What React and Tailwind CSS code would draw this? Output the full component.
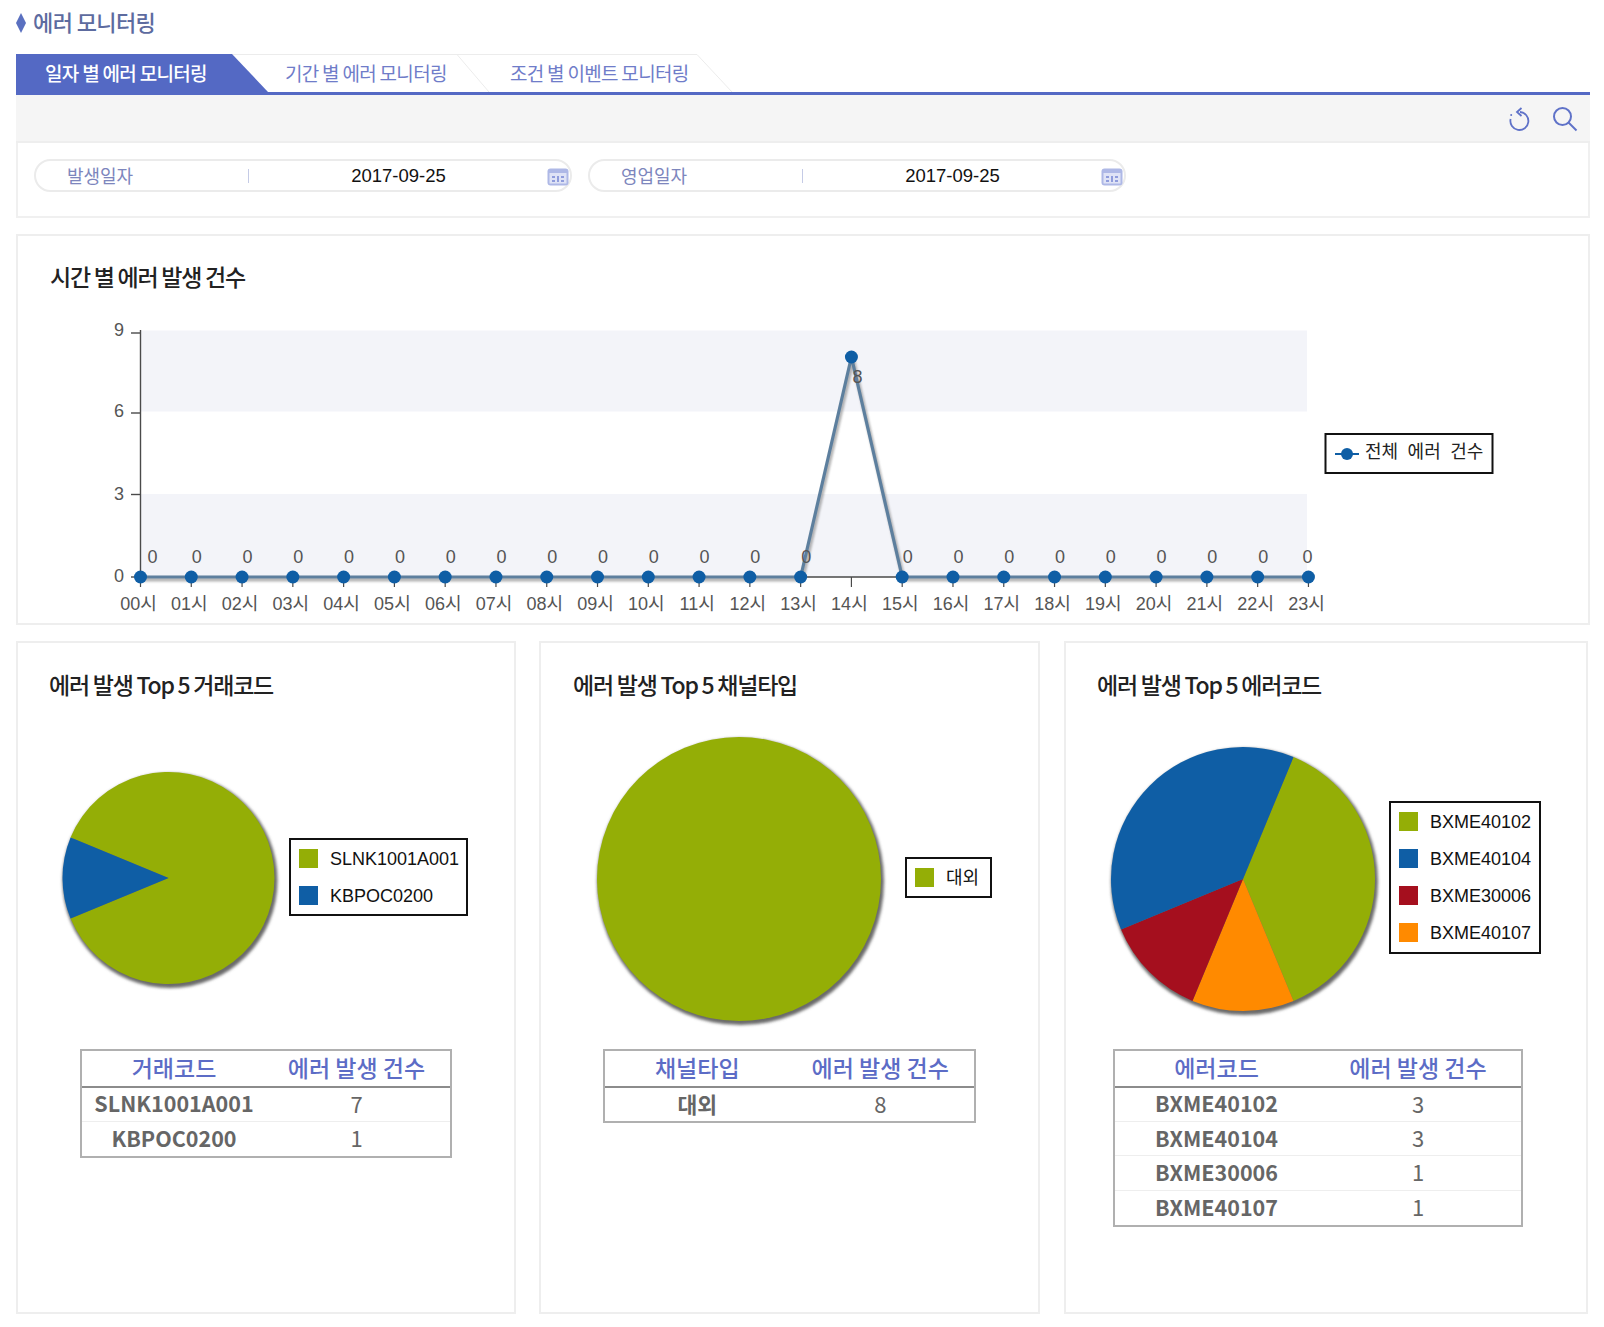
const CJK = "font-['Noto_Sans_CJK_KR','Noto_Sans',sans-serif]"
const CHART_FONT = "'Liberation Sans','Noto Sans CJK KR',sans-serif"

const GREEN = "#94ae06"
const BLUE = "#0f5ea5"
const RED = "#a50f1e"
const ORANGE = "#ff8a00"

const hours = Array.from({ length: 24 }, (_, i) => String(i).padStart(2, "0"))
const xAt = (i) => 140.5 + i * 50.78
const yAt = (v) => 577 - v * 27.5
const values = hours.map((_, i) => (i === 14 ? 8 : 0))

const arc = (cx, cy, r, from, to) => {
  const pt = (a) => {
    const rad = ((a - 90) * Math.PI) / 180
    return `${cx + r * Math.cos(rad)} ${cy + r * Math.sin(rad)}`
  }
  return `M${cx} ${cy}L${pt(from)}A${r} ${r} 0 ${to - from > 180 ? 1 : 0} 1 ${pt(to)}Z`
}

const Pie = ({ cx, cy, r, slices }) => (
  <g>
    <circle cx={cx + 1.5} cy={cy + 2.5} r={r + 1.5} fill="#6a6a6a" filter="url(#pieShadow)" />
    {slices.length === 1 ? (
      <circle cx={cx} cy={cy} r={r} fill={slices[0].color} />
    ) : (
      slices.map((s) => <path key={s.color} d={arc(cx, cy, r, s.from, s.to)} fill={s.color} />)
    )}
  </g>
)

const Legend = ({ x, y, w, h, items }) => (
  <g fontFamily={CHART_FONT} fontSize="18">
    <rect x={x} y={y} width={w} height={h} fill="#fff" stroke="#111" strokeWidth="2" />
    {items.map((item, i) => (
      <g key={item.label}>
        <rect x={x + 9} y={y + 10 + i * 37} width="19" height="19" fill={item.color} />
        <text x={x + 40} y={y + 26 + i * 37} fill="#111">
          {item.label}
        </text>
      </g>
    ))}
  </g>
)

const PieCard = ({ className, titleClass, title, viewBox, width, pie, legend, tableClass, headers, rows }) => (
  <div className={`border-2 border-[#eeeeee] h-[673px] box-border ${className}`}>
    <h3 className={`h-[82px] flex items-center text-[23px] font-medium tracking-[-1.25px] text-[#222222] ${titleClass} ${CJK}`}>
      {title}
    </h3>
    <svg viewBox={viewBox} width={width} height="318" className="block">
      <defs>
        <filter id="pieShadow" x="-10%" y="-10%" width="120%" height="120%">
          <feGaussianBlur stdDeviation="1.8" />
        </filter>
      </defs>
      <Pie {...pie} />
      <Legend {...legend} />
    </svg>
    <div className={`mt-[6px] border-2 border-[#b0b0b0] ${tableClass}`}>
      <table className={`w-full table-fixed text-center ${CJK}`}>
        <thead>
          <tr className="h-[36px] border-b-2 border-[#8c8c8c] text-[23px] leading-[30px] text-[#5c6cc6]">
            <th className="font-medium pb-[4px]">{headers[0]}</th>
            <th className="font-medium pr-[3px] pb-[4px]">{headers[1]}</th>
          </tr>
        </thead>
        <tbody>
          {rows.map((row, i) => (
            <tr
              key={row[0]}
              className={`h-[34.4px] text-[21.5px] leading-[28px] text-[#666666] ${i > 0 ? "border-t border-[#eeeeee]" : ""}`}
            >
              <td className="font-bold pb-[2px]">{row[0]}</td>
              <td className="text-[22px] pr-[3px] pb-[3px]">{row[1]}</td>
            </tr>
          ))}
        </tbody>
      </table>
    </div>
  </div>
)

const CalendarIcon = () => (
  <svg viewBox="0 0 22 18" className="w-[22px] h-[18px]">
    <rect x="0.5" y="0.5" width="21" height="17" rx="3" fill="#aeb8e6" />
    <rect x="2.5" y="5" width="17" height="10.5" fill="#dfe3f6" />
    <path d="M5 8h3v2H5zM10 8h2v6h-2zM14 8h3v2h-3zM5 12h3v2H5zM14 12h3v2h-3z" fill="#8f9cdc" />
  </svg>
)

const DateField = ({ label, date }) => (
  <div className="relative h-[33px] w-[538px] rounded-full border-2 border-[#ebebeb] flex items-center">
    <span className={`w-[212px] pl-[31px] text-[18px] tracking-[-0.1px] text-[#7d86bd] ${CJK}`}>{label}</span>
    <span className="w-px h-[14px] bg-[#c5cbe6]" />
    <span className="flex-1 pr-[22px] text-center text-[18.5px] text-[#111111] font-['Liberation_Sans',sans-serif]">{date}</span>
    <span className="absolute right-[1px] top-[7px]">
      <CalendarIcon />
    </span>
  </div>
)

const LineChart = () => (
  <svg viewBox="18 316 1570 307" width="1570" height="307" className="block" fontFamily={CHART_FONT} fontSize="18">
    <defs>
      <filter id="lineShadow" x="-2%" y="-10%" width="104%" height="120%">
        <feGaussianBlur stdDeviation="1.2" />
      </filter>
    </defs>
    <rect x="141" y="330.5" width="1166" height="81" fill="#f3f4f9" />
    <rect x="141" y="494" width="1166" height="83" fill="#f3f4f9" />
    <path d="M140.5 330V577H1308" fill="none" stroke="#4a4a4a" strokeWidth="1.4" />
    {[9, 6, 3, 0].map((v) => (
      <g key={v}>
        <path d={`M131 ${yAt(v) + (v === 9 ? 3.5 : v === 6 ? 1 : 0)}h9`} stroke="#4a4a4a" strokeWidth="1.4" />
        <text x="114" y={yAt(v) + (v === 9 ? 6 : 5)} fill="#555555">
          {v}
        </text>
      </g>
    ))}
    {hours.map((h, i) => (
      <g key={h}>
        <path d={`M${xAt(i)} 577v10`} stroke="#4a4a4a" strokeWidth="1.2" />
        <text x={xAt(i) - 2} y="610" textAnchor="middle" fill="#555555">
          {h}시
        </text>
      </g>
    ))}
    <polyline
      points={values.map((v, i) => `${xAt(i) + 1.5},${yAt(v) + 2.5}`).join(" ")}
      fill="none"
      stroke="#777777"
      strokeWidth="4"
      opacity="0.55"
      filter="url(#lineShadow)"
    />
    <polyline
      points={values.map((v, i) => `${xAt(i)},${yAt(v)}`).join(" ")}
      fill="none"
      stroke="#5d7f9e"
      strokeWidth="3.2"
    />
    {values.map((v, i) => (
      <circle key={i} cx={xAt(i)} cy={yAt(v)} r="6.5" fill={BLUE} />
    ))}
    {values.map((v, i) =>
      v > 0 ? (
        <text key={i} x={xAt(i) + 6} y={yAt(v) + 26} textAnchor="middle" fill="#555555">
          {v}
        </text>
      ) : (
        <text key={i} x={xAt(i) + (i === 0 ? 12 : i === 23 ? -1 : 5.5)} y="563" textAnchor="middle" fill="#555555">
          {v}
        </text>
      ),
    )}
    <rect x="1325.5" y="434" width="167" height="39" fill="#fff" stroke="#111" strokeWidth="2" />
    <path d="M1335 454h24" stroke={BLUE} strokeWidth="2" />
    <circle cx="1347" cy="454" r="6" fill={BLUE} />
    <text x="1365" y="458" fill="#222222" wordSpacing="4.5">
      전체 에러 건수
    </text>
  </svg>
)

export default function App() {
  return (
    <div className="w-[1604px] h-[1327px] bg-white overflow-hidden pl-[16px] relative">
      {/* Title */}
      <div className={`h-[54px] flex items-start pt-[5px] gap-[7px] text-[22px] tracking-[-0.6px] text-[#5d6b9f] ${CJK}`}>
        <svg viewBox="0 0 10 20" className="w-[10px] h-[20px] mt-[8px]">
          <path d="M5 0L10 10L5 20L0 10Z" fill="#5a70c0" />
        </svg>
        <h1 className="font-medium leading-[32px]">에러 모니터링</h1>
      </div>

      {/* Tabs */}
      <div className={`relative h-[41px] w-[1574px] border-b-[3px] border-[#5469c4] flex text-[19px] tracking-[-0.7px] ${CJK}`}>
        <svg className="absolute left-0 top-0" width="730" height="38" viewBox="0 0 730 38">
          <path d="M216 0.5H441L473 38" fill="none" stroke="#ececec" />
          <path d="M441 0.5H681L716 38" fill="none" stroke="#ececec" />
        </svg>
        <button className="relative w-[252px] h-[38px] pl-[29px] text-left font-medium text-white bg-[#5469c4] [clip-path:polygon(0_0,216px_0,252px_100%,0_100%)]">
          일자 별 에러 모니터링
        </button>
        <button className="relative w-[242px] h-[38px] pl-[17px] text-left text-[#6f7cc9]">기간 별 에러 모니터링</button>
        <button className="relative h-[38px] text-left text-[#6f7cc9]">조건 별 이벤트 모니터링</button>
      </div>

      {/* Toolbar */}
      <div className="w-[1574px] h-[48px] bg-[#f5f5f5] border-b-2 border-[#eeeeee] flex items-center justify-end pr-[12px] gap-[21px]">
        <svg viewBox="0 0 24 26" className="w-[24px] h-[26px] mt-[4px]" fill="none" stroke="#5f72c8" strokeWidth="1.8">
          <path d="M13 5a9 9 0 1 1-9.4 7" />
          <path d="M14.5 1L10 5l4.5 4" />
          <circle cx="4.2" cy="8" r="1" fill="#5f72c8" stroke="none" />
        </svg>
        <svg viewBox="0 0 26 26" className="w-[26px] h-[26px] mt-[2px]" fill="none" stroke="#5f72c8" strokeWidth="2">
          <circle cx="10.5" cy="10.5" r="8.5" />
          <path d="M16.5 16.5l8 8" />
        </svg>
      </div>

      {/* Search */}
      <div className="w-[1574px] h-[75px] border-2 border-t-0 border-[#f0f0f0] pt-[16px] pl-[16px] flex gap-[16px]">
        <DateField label="발생일자" date="2017-09-25" />
        <DateField label="영업일자" date="2017-09-25" />
      </div>

      {/* Hourly chart */}
      <div className="mt-[16px] w-[1574px] h-[391px] border-2 border-[#eeeeee]">
        <h3 className={`h-[80px] flex items-center pl-[32px] text-[23px] font-medium tracking-[-1.25px] text-[#222222] ${CJK}`}>
          시간 별 에러 발생 건수
        </h3>
        <LineChart />
      </div>

      {/* Top 5 */}
      <div className="mt-[16px] flex">
        <PieCard
          className="w-[500px]"
          titleClass="pl-[31px]"
          title="에러 발생 Top 5 거래코드"
          viewBox="18 725 495 318"
          width="495"
          pie={{
            cx: 168.5,
            cy: 878,
            r: 106,
            slices: [
              { color: GREEN, from: -67.5, to: 247.5 },
              { color: BLUE, from: 247.5, to: 292.5 },
            ],
          }}
          legend={{
            x: 290,
            y: 839,
            w: 177,
            h: 76,
            items: [
              { label: "SLNK1001A001", color: GREEN },
              { label: "KBPOC0200", color: BLUE },
            ],
          }}
          tableClass="ml-[62px] w-[372px]"
          headers={["거래코드", "에러 발생 건수"]}
          rows={[
            ["SLNK1001A001", 7],
            ["KBPOC0200", 1],
          ]}
        />
        <PieCard
          className="ml-[23px] w-[501px]"
          titleClass="pl-[32px]"
          title="에러 발생 Top 5 채널타입"
          viewBox="541 725 496 318"
          width="496"
          pie={{ cx: 739, cy: 879, r: 142, slices: [{ color: GREEN }] }}
          legend={{ x: 906, y: 858, w: 85, h: 39, items: [{ label: "대외", color: GREEN }] }}
          tableClass="ml-[62px] w-[373px]"
          headers={["채널타입", "에러 발생 건수"]}
          rows={[["대외", 8]]}
        />
        <PieCard
          className="ml-[24px] w-[524px]"
          titleClass="pl-[31px]"
          title="에러 발생 Top 5 에러코드"
          viewBox="1066 725 520 318"
          width="520"
          pie={{
            cx: 1243,
            cy: 879,
            r: 132,
            slices: [
              { color: GREEN, from: 22.5, to: 157.5 },
              { color: ORANGE, from: 157.5, to: 202.5 },
              { color: RED, from: 202.5, to: 247.5 },
              { color: BLUE, from: 247.5, to: 382.5 },
            ],
          }}
          legend={{
            x: 1390,
            y: 802,
            w: 150,
            h: 151,
            items: [
              { label: "BXME40102", color: GREEN },
              { label: "BXME40104", color: BLUE },
              { label: "BXME30006", color: RED },
              { label: "BXME40107", color: ORANGE },
            ],
          }}
          tableClass="ml-[47px] w-[410px]"
          headers={["에러코드", "에러 발생 건수"]}
          rows={[
            ["BXME40102", 3],
            ["BXME40104", 3],
            ["BXME30006", 1],
            ["BXME40107", 1],
          ]}
        />
      </div>
    </div>
  )
}
